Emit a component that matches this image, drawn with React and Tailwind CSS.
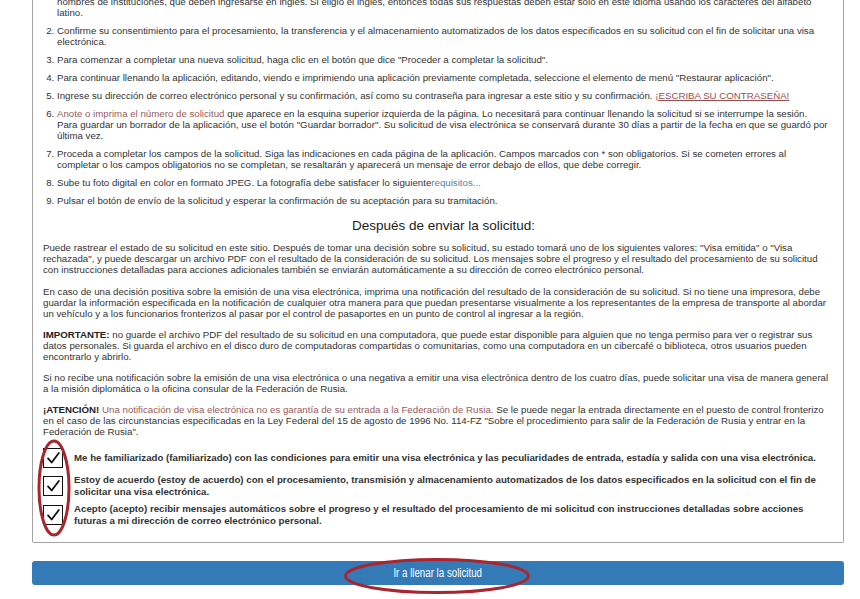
import React from "react";

const Check = () => (
  <span className="flex h-[20px] w-[20px] shrink-0 items-center justify-center border-[1.5px] border-[#111] bg-white">
    <svg viewBox="0 0 20 20" className="h-[18px] w-[18px]" fill="none" stroke="#111" strokeWidth="2" strokeLinecap="round" strokeLinejoin="round">
      <polyline points="4.5 10.5 8.5 15 16.5 4.5" />
    </svg>
  </span>
);

const AgreeRow = ({ children }) => (
  <label className="flex items-center gap-[11px]">
    <Check />
    <span className="font-bold text-[9.7px] leading-[11.5px] text-[#333]">{children}</span>
  </label>
);

const App = () => {
  return (
    <div className="relative h-[599px] w-[860px] overflow-hidden bg-white font-['Liberation_Sans',Arial,sans-serif] text-[9.7px] leading-[11px] text-[#333]">
      {/* panel with instructions, scrolled so its top is off screen */}
      <div className="-mt-[4px] ml-[32px] w-[812px] rounded-b-[2px] border-x border-b border-[#a3a3a3] pl-[10px] pr-[13px] pb-[16px]">
        <ol className="list-decimal pl-[14px]">
          <li className="mb-[7px] list-none">
            nombres de instituciones, que deben ingresarse en inglés. Si eligió el inglés, entonces todas sus respuestas deben estar solo en este idioma usando los caracteres del alfabeto latino.
          </li>
          <li className="mb-[7px]" value={2}>
            Confirme su consentimiento para el procesamiento, la transferencia y el almacenamiento automatizados de los datos especificados en su solicitud con el fin de solicitar una visa electrónica.
          </li>
          <li className="mb-[7px]">
            Para comenzar a completar una nueva solicitud, haga clic en el botón que dice "Proceder a completar la solicitud".
          </li>
          <li className="mb-[7px]">
            Para continuar llenando la aplicación, editando, viendo e imprimiendo una aplicación previamente completada, seleccione el elemento de menú "Restaurar aplicación".
          </li>
          <li className="mb-[7px]">
            Ingrese su dirección de correo electrónico personal y su confirmación, así como su contraseña para ingresar a este sitio y su confirmación.{" "}
            <a href="#" className="text-[#9a4d4d] underline">¡ESCRIBA SU CONTRASEÑA!</a>
          </li>
          <li className="mb-[7px]">
            <a href="#" className="text-[#9a5a5a]">Anote o imprima el número de solicitud</a> que aparece en la esquina superior izquierda de la página. Lo necesitará para continuar llenando la solicitud si se interrumpe la sesión.
            <br />
            Para guardar un borrador de la aplicación, use el botón "Guardar borrador". Su solicitud de visa electrónica se conservará durante 30 días a partir de la fecha en que se guardó por última vez.
          </li>
          <li className="mb-[7px]">
            Proceda a completar los campos de la solicitud. Siga las indicaciones en cada página de la aplicación. Campos marcados con * son obligatorios. Si se cometen errores al completar o los campos obligatorios no se completan, se resaltarán y aparecerá un mensaje de error debajo de ellos, que debe corregir.
          </li>
          <li className="mb-[7px]">
            Sube tu foto digital en color en formato JPEG. La fotografía debe satisfacer lo siguiente
            <a href="#" className="text-[#4f86a6]">requisitos...</a>
          </li>
          <li>
            Pulsar el botón de envío de la solicitud y esperar la confirmación de su aceptación para su tramitación.
          </li>
        </ol>

        <h3 className="mt-[12px] mb-[8px] pl-[14px] text-center text-[13.5px] leading-[16px] text-[#222]">
          Después de enviar la solicitud:
        </h3>

        <p className="mb-[11px]">
          Puede rastrear el estado de su solicitud en este sitio. Después de tomar una decisión sobre su solicitud, su estado tomará uno de los siguientes valores: "Visa emitida" o "Visa rechazada", y puede descargar un archivo PDF con el resultado de la consideración de su solicitud. Los mensajes sobre el progreso y el resultado del procesamiento de su solicitud con instrucciones detalladas para acciones adicionales también se enviarán automáticamente a su dirección de correo electrónico personal.
        </p>
        <p className="mb-[10px]">
          En caso de una decisión positiva sobre la emisión de una visa electrónica, imprima una notificación del resultado de la consideración de su solicitud. Si no tiene una impresora, debe guardar la información especificada en la notificación de cualquier otra manera para que puedan presentarse visualmente a los representantes de la empresa de transporte al abordar un vehículo y a los funcionarios fronterizos al pasar por el control de pasaportes en un punto de control al ingresar a la región.
        </p>
        <p className="mb-[10px]">
          <b className="text-[#222]">IMPORTANTE:</b> no guarde el archivo PDF del resultado de su solicitud en una computadora, que puede estar disponible para alguien que no tenga permiso para ver o registrar sus datos personales. Si guarda el archivo en el disco duro de computadoras compartidas o comunitarias, como una computadora en un cibercafé o biblioteca, otros usuarios pueden encontrarlo y abrirlo.
        </p>
        <p className="mb-[10px]">
          Si no recibe una notificación sobre la emisión de una visa electrónica o una negativa a emitir una visa electrónica dentro de los cuatro días, puede solicitar una visa de manera general a la misión diplomática o la oficina consular de la Federación de Rusia.
        </p>
        <p className="mb-[11px]">
          <b className="text-[#222]">¡ATENCIÓN!</b>{" "}
          <span className="text-[#9a5a5a]">Una notificación de visa electrónica no es garantía de su entrada a la Federación de Rusia.</span>{" "}
          Se le puede negar la entrada directamente en el puesto de control fronterizo en el caso de las circunstancias especificadas en la Ley Federal del 15 de agosto de 1996 No. 114-FZ "Sobre el procedimiento para salir de la Federación de Rusia y entrar en la Federación de Rusia".
        </p>

        <div className="flex flex-col gap-[6px]">
          <AgreeRow>
            Me he familiarizado (familiarizado) con las condiciones para emitir una visa electrónica y las peculiaridades de entrada, estadía y salida con una visa electrónica.
          </AgreeRow>
          <AgreeRow>
            Estoy de acuerdo (estoy de acuerdo) con el procesamiento, transmisión y almacenamiento automatizados de los datos especificados en la solicitud con el fin de solicitar una visa electrónica.
          </AgreeRow>
          <AgreeRow>
            Acepto (acepto) recibir mensajes automáticos sobre el progreso y el resultado del procesamiento de mi solicitud con instrucciones detalladas sobre acciones futuras a mi dirección de correo electrónico personal.
          </AgreeRow>
        </div>
      </div>

      <div className="ml-[32px] mt-[18px] w-[812px]">
        <button className="flex h-[24px] w-full items-center justify-center rounded-[3px] bg-[#337ab7] text-white">
          <span className="inline-block scale-x-[0.81] text-[12px] leading-none">Ir a llenar la solicitud</span>
        </button>
      </div>

      {/* hand-drawn red marks over the screenshot */}
      <svg className="pointer-events-none absolute left-[37px] top-[439px]" width="36" height="100" viewBox="0 0 36 100" fill="none">
        <ellipse cx="17" cy="49" rx="15" ry="47" stroke="#a8262f" strokeWidth="3" />
      </svg>
      <svg className="pointer-events-none absolute left-[343px] top-[557px]" width="188" height="38" viewBox="0 0 188 38" fill="none">
        <ellipse cx="94" cy="19" rx="91.5" ry="16.5" stroke="#a8262f" strokeWidth="3" />
      </svg>
    </div>
  );
};

export default App;
